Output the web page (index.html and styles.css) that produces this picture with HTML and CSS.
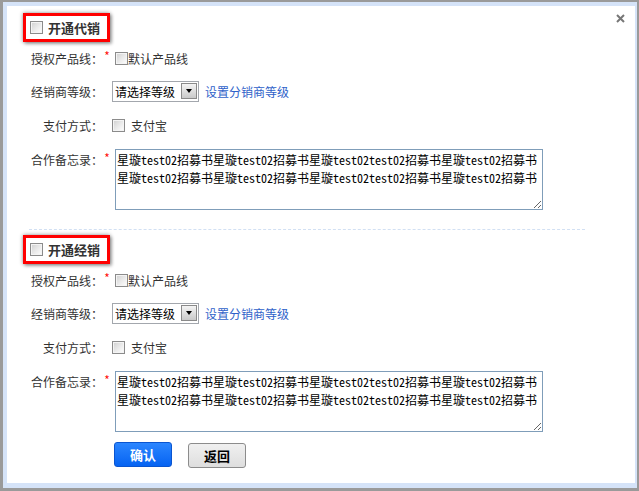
FILE: index.html
```html
<!DOCTYPE html>
<html lang="zh-CN">
<head>
    <meta charset="UTF-8">
    <meta name="viewport" content="width=device-width, initial-scale=1.0">
    <title>开通代销 / 经销</title>
    <link rel="stylesheet" href="styles.css">
</head>
<body>
    <div class="dialog">
        <!-- close button -->
        <a class="close" href="#" title="关闭">
            <svg width="9" height="9" viewBox="0 0 9 9">
                <path d="M1 1L8 8M8 1L1 8" stroke="#777" stroke-width="2" fill="none"/>
            </svg>
        </a>

        <!-- 代销 -->
        <div class="section">
            <div class="section-head">
                <input type="checkbox" class="chk">
                <span>开通代销</span>
            </div>
            <div class="row row-first">
                <label class="lbl">授权产品线：</label>
                <span class="req">*</span>
                <div class="field">
                    <input type="checkbox" class="chk"><span>默认产品线</span>
                </div>
            </div>
            <div class="row">
                <label class="lbl">经销商等级：</label>
                <span class="spacer"></span>
                <div class="field">
                    <span class="select">
                        <select>
                            <option>请选择等级</option>
                        </select>
                        <span class="arrow"></span>
                    </span>
                    <a class="link" href="#">设置分销商等级</a>
                </div>
            </div>
            <div class="row">
                <label class="lbl">支付方式：</label>
                <span class="spacer"></span>
                <div class="field">
                    <input type="checkbox" class="chk"><span class="chk-text">支付宝</span>
                </div>
            </div>
            <div class="row row-memo">
                <label class="lbl">合作备忘录：</label>
                <span class="req">*</span>
                <div class="field">
                    <textarea class="memo">星璇test02招募书星璇test02招募书星璇test02test02招募书星璇test02招募书
星璇test02招募书星璇test02招募书星璇test02test02招募书星璇test02招募书</textarea>
                </div>
            </div>
        </div>

        <div class="divider"></div>

        <!-- 经销 -->
        <div class="section">
            <div class="section-head">
                <input type="checkbox" class="chk">
                <span>开通经销</span>
            </div>
            <div class="row row-first">
                <label class="lbl">授权产品线：</label>
                <span class="req">*</span>
                <div class="field">
                    <input type="checkbox" class="chk"><span>默认产品线</span>
                </div>
            </div>
            <div class="row">
                <label class="lbl">经销商等级：</label>
                <span class="spacer"></span>
                <div class="field">
                    <span class="select">
                        <select>
                            <option>请选择等级</option>
                        </select>
                        <span class="arrow"></span>
                    </span>
                    <a class="link" href="#">设置分销商等级</a>
                </div>
            </div>
            <div class="row">
                <label class="lbl">支付方式：</label>
                <span class="spacer"></span>
                <div class="field">
                    <input type="checkbox" class="chk"><span class="chk-text">支付宝</span>
                </div>
            </div>
            <div class="row row-memo">
                <label class="lbl">合作备忘录：</label>
                <span class="req">*</span>
                <div class="field">
                    <textarea class="memo">星璇test02招募书星璇test02招募书星璇test02test02招募书星璇test02招募书
星璇test02招募书星璇test02招募书星璇test02test02招募书星璇test02招募书</textarea>
                </div>
            </div>
        </div>

        <!-- actions -->
        <div class="actions">
            <button class="btn btn-ok">确认</button>
            <button class="btn btn-back">返回</button>
        </div>
    </div>
</body>
</html>
```
FILE: styles.css
```css
body {
    margin: 0;
    background-color: #9a9a9a;
    font-family: "Noto Sans Mono CJK SC", "Noto Sans CJK SC", sans-serif;
    font-size: 12px;
    color: #333;
}

.dialog {
    position: relative;
    box-sizing: border-box;
    width: 634px;
    height: 486px;
    margin: 2px 0 0 3px;
    padding-top: 7px;
    background-color: #fff;
    border-style: solid;
    border-color: #d5e3f8;
    border-width: 4px 2px 5px 4px;
}

.close {
    position: absolute;
    top: 8px;
    right: 10px;
    display: block;
    width: 9px;
    height: 9px;
    line-height: 0;
}

/* section header with red frame */
.section-head {
    display: inline-flex;
    align-items: center;
    box-sizing: border-box;
    height: 29px;
    margin-left: 16px;
    padding: 0 7px 0 4px;
    border: 3px solid #ff0000;
    box-shadow: 0 0 4px rgba(0, 0, 0, 0.45), 2px 2px 3px rgba(0, 0, 0, 0.25);
    font-size: 13px;
    font-weight: bold;
    color: #333;
}

.section-head .chk {
    margin-right: 5px;
}

/* form rows */
.row {
    display: flex;
    align-items: center;
    height: 34px;
}

.row-first {
    height: 32px;
}

.lbl {
    width: 96px;
    text-align: right;
    white-space: nowrap;
}

.req {
    width: 12px;
    margin-bottom: 6px;
    color: #ff0000;
    text-indent: 1px;
}

.spacer {
    width: 9px;
}

.field {
    display: flex;
    align-items: center;
}

.row-memo {
    align-items: flex-start;
    height: auto;
    padding-top: 7px;
}

.row-memo .lbl {
    margin-top: 2px;
    line-height: 18px;
}

.row-memo .req {
    margin: 2px 0 0;
    line-height: 14px;
}

/* checkbox */
.chk {
    appearance: none;
    -webkit-appearance: none;
    box-sizing: border-box;
    width: 13px;
    height: 13px;
    margin: 0;
    border: 1px solid #8b8b8b;
    background: linear-gradient(135deg, #cfcfcf 0%, #e9e9e9 50%, #ffffff 100%);
    box-shadow: inset 0 0 0 1px #f4f4f4;
}

.chk-text {
    margin-left: 6px;
}

/* select */
.select {
    display: inline-flex;
    align-items: center;
    box-sizing: border-box;
    width: 87px;
    height: 21px;
    border: 1px solid #a3a7ad;
    background-color: #fff;
}

.select select {
    appearance: none;
    -webkit-appearance: none;
    width: 67px;
    height: 19px;
    margin: 0;
    padding: 0 0 0 2px;
    border: none;
    outline: none;
    background: transparent;
    font-family: inherit;
    font-size: 12px;
    color: #000;
}

.arrow {
    display: flex;
    align-items: center;
    justify-content: center;
    box-sizing: border-box;
    width: 16px;
    height: 16px;
    margin-left: 1px;
    border: 1px solid #8a8a8a;
    background: linear-gradient(#f4f4f4, #c9c9c9);
}

.arrow::after {
    content: "";
    border-left: 3px solid transparent;
    border-right: 3px solid transparent;
    border-top: 4px solid #000;
}

.link {
    margin-left: 6px;
    color: #2f62c9;
    text-decoration: none;
}

/* memo */
.memo {
    box-sizing: border-box;
    width: 428px;
    height: 61px;
    margin: 0;
    padding: 1px 1px;
    border: 1px solid #7f9db9;
    font-family: inherit;
    font-size: 12px;
    line-height: 18px;
    color: #000;
    overflow: hidden;
}

.divider {
    width: 556px;
    margin: 19px 0 5px 22px;
    border-top: 1px dashed #d2e0f3;
}

/* buttons */
.actions {
    display: flex;
    gap: 16px;
    margin: 10px 0 0 107px;
}

.btn {
    box-sizing: border-box;
    width: 58px;
    height: 25px;
    padding: 0;
    border-radius: 3px;
    font-family: inherit;
    font-size: 13px;
    font-weight: bold;
    cursor: pointer;
}

.btn-ok {
    border: 1px solid #0a55d0;
    background: linear-gradient(#2b86ff, #0663f2);
    color: #fff;
}

.btn-back {
    margin-top: 1px;
    border: 1px solid #8c8c8c;
    background: linear-gradient(#f0f0f0, #dedede);
    color: #000;
}
```
